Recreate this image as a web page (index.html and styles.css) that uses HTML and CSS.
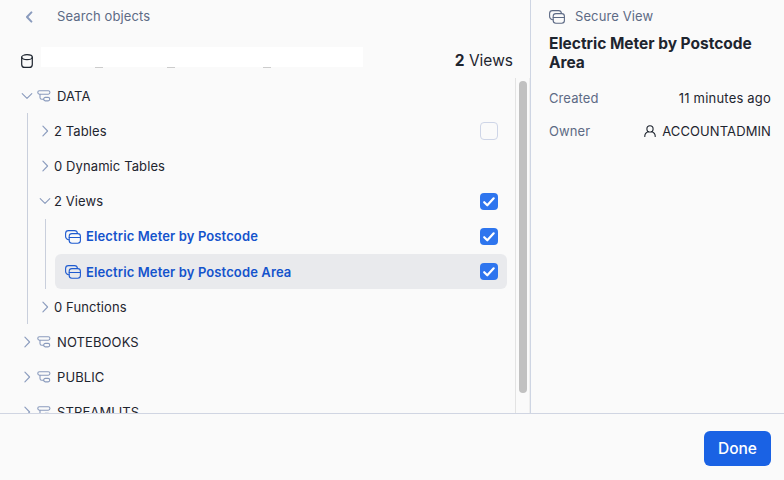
FILE: index.html
```
<!DOCTYPE html>
<html lang="en">
<head>
<meta charset="utf-8">
<title>Select objects</title>
<link rel="stylesheet" href="styles.css">
</head>
<body>
<svg class="defs" aria-hidden="true">
  <symbol id="right" viewBox="0 0 14 14"><path d="M4.9 2.2 9.6 7l-4.7 4.8"/></symbol>
  <symbol id="down" viewBox="0 0 14 14"><path d="M2.2 4.7 7 9.4l4.8-4.7"/></symbol>
  <symbol id="schema" viewBox="0 0 14 12"><rect x=".8" y=".7" width="12.1" height="3.5" rx="1.6"/><rect x="6.7" y="7.4" width="6" height="3.5" rx="1.6"/><path d="M3 4.2v3.2q0 1.8 1.8 1.8h1.9"/></symbol>
  <symbol id="view" viewBox="0 0 16 14"><path d="M4.1 9.7H3.5Q.6 8.9.6 6.5v-3Q.6.6 3.5.6h6q2.7 0 3 2.9"/><rect x="4.2" y="3.6" width="11.2" height="9.7" rx="2.7"/><path d="M4.2 7.5h11.2"/></symbol>
  <symbol id="check" viewBox="0 0 18 17"><path d="m4.2 9.2 3.1 3.1 6.4-7"/></symbol>
</svg>
<main class="main">
  <section class="browser">
    <div class="search">
      <svg class="back" viewBox="0 0 8 12"><path d="M6.4 1.4 2 6l4.4 4.6"/></svg>
      <span>Search objects</span>
    </div>
    <div class="database">
      <svg class="db" viewBox="0 0 12 14"><ellipse cx="6" cy="3.2" rx="5.3" ry="2.5"/><path d="M.7 3.2v7.2q0 3 3 3h4.6q3 0 3-3V3.2"/></svg>
      <div class="name"><i></i><i></i><i></i></div>
      <div class="count"><b>2</b> Views</div>
    </div>
    <div class="scroller">
      <div class="tree">
        <div class="row"><svg class="chev"><use href="#down"/></svg><svg class="schema"><use href="#schema"/></svg><span>DATA</span></div>
        <div class="group">
          <div class="row"><svg class="chev"><use href="#right"/></svg><span>2 Tables</span><span class="box"></span></div>
          <div class="row"><svg class="chev"><use href="#right"/></svg><span>0 Dynamic Tables</span></div>
          <div class="row"><svg class="chev"><use href="#down"/></svg><span>2 Views</span><svg class="box on"><use href="#check"/></svg></div>
          <div class="group">
            <div class="row leaf"><svg class="view"><use href="#view"/></svg><span>Electric Meter by Postcode</span><svg class="box on"><use href="#check"/></svg></div>
            <div class="row leaf selected"><svg class="view"><use href="#view"/></svg><span>Electric Meter by Postcode Area</span><svg class="box on"><use href="#check"/></svg></div>
          </div>
          <div class="row"><svg class="chev"><use href="#right"/></svg><span>0 Functions</span></div>
        </div>
        <div class="row"><svg class="chev"><use href="#right"/></svg><svg class="schema"><use href="#schema"/></svg><span>NOTEBOOKS</span></div>
        <div class="row"><svg class="chev"><use href="#right"/></svg><svg class="schema"><use href="#schema"/></svg><span>PUBLIC</span></div>
        <div class="row"><svg class="chev"><use href="#right"/></svg><svg class="schema"><use href="#schema"/></svg><span>STREAMLITS</span></div>
      </div>
      <div class="track"><div class="thumb"></div></div>
    </div>
  </section>
  <aside class="details">
    <div class="kind"><svg class="view"><use href="#view"/></svg><span>Secure View</span></div>
    <h1>Electric Meter by Postcode Area</h1>
    <div class="field"><span class="key">Created</span><span class="time">11 minutes ago</span></div>
    <div class="field"><span class="key">Owner</span><svg class="user" viewBox="0 0 12 12"><circle cx="6" cy="3.9" r="3.1"/><path d="M.8 11.6V11q0-2.8 3.6-4.4M11.2 11.6V11q0-2.8-3.6-4.4"/></svg><span>ACCOUNTADMIN</span></div>
  </aside>
</main>
<footer class="footer"><button class="done">Done</button></footer>
</body>
</html>
```

FILE: styles.css
```
* { box-sizing: border-box; }
body {
  margin: 0;
  width: 784px;
  height: 480px;
  overflow: hidden;
  display: flex;
  flex-direction: column;
  background: #fafafa;
  color: #1e252f;
  font: 13px/20px Inter, sans-serif;
  letter-spacing: .1px;
}
.defs { position: absolute; width: 0; height: 0; }
svg { display: block; flex: none; fill: none; stroke: currentColor; stroke-width: 1.1; stroke-linecap: round; stroke-linejoin: round; }
.main { display: flex; height: 413px; }
.browser { width: 530px; display: flex; flex-direction: column; }
.search { display: flex; align-items: center; height: 33px; padding: 0 0 1px 25px; gap: 24px; color: #5d6a85; }
.back { width: 8px; height: 12px; margin-top: 1px; color: #8a9bbd; stroke-width: 2; }
.database { display: flex; align-items: center; height: 45px; padding: 0 17px 0 21px; }
.db { width: 12px; height: 14px; margin-top: 10px; stroke-width: 1.2; }
.name { display: flex; align-items: flex-end; width: 322px; height: 21px; margin: 3px 0 0 8px; padding-left: 54px; gap: 64px; background: linear-gradient(#fff 20px, transparent 20px); }
.name i { width: 8px; height: 1px; background: #ccc; }
.name i:last-child { margin-left: 24px; }
.count { margin: 11px 0 0 auto; font-size: 15.5px; letter-spacing: 0; }
.count b { font-weight: 700; }
.scroller { display: flex; flex: 1; min-height: 0; overflow: hidden; }
.tree { width: 515px; flex: none; padding: .3px 0 0 20px; }
.row { display: flex; align-items: center; height: 35.15px; padding-right: 17px; }
.row > span:not(.box) { white-space: nowrap; }
.chev { width: 14px; height: 14px; color: #8a9bbd; }
.schema { width: 14px; height: 12px; margin: 0 6px 0 3px; color: #8a9bbd; }
.group { margin-left: 7px; padding-left: 10px; border-left: 1px solid #c9cfdc; }
.group .chev { margin: 0 2px 0 0; }
.group .group { padding-left: 9px; }
.view { width: 16px; height: 14px; }
.leaf { padding: 0 9px 0 10px; margin-right: 8px; gap: 5px; color: #1453cc; font-weight: 600; letter-spacing: .12px; }
.leaf .view { margin-top: 1px; color: #1f5bd0; }
.selected { background: #e9eaed; border-radius: 6px; }
.box { width: 18px; height: 18px; flex: none; margin-left: auto; border: 1px solid #ced5e7; border-radius: 4px; }
.box.on { height: 17px; border: 0; background: #2e75ee; color: #fff; stroke-width: 2.2; }
.track { width: 15px; padding: 3px 3px 0; border-left: 1px solid #e3e3e3; border-right: 1px solid #eee; }
.thumb { width: 8px; height: 312px; border-radius: 4px; background: #c1c1c1; }
.details { width: 254px; padding: 6px 13px 0 18px; border-left: 1px solid #ced5e3; }
.kind { display: flex; align-items: center; gap: 10px; color: #5d6a85; }
.kind .view { margin-top: 1px; }
h1 { margin: 8px 0 16px; font-size: 15.5px; line-height: 19px; font-weight: 700; letter-spacing: -.02px; }
.field { display: flex; align-items: center; justify-content: flex-end; height: 20px; margin-bottom: 13px; }
.key { margin-right: auto; color: #5d6a85; }
.time { letter-spacing: .2px; }
.user { width: 12px; height: 12px; margin-right: 6px; }
.footer { display: flex; justify-content: flex-end; height: 67px; padding: 17px 13px 0 0; border-top: 1px solid #d0d5e2; }
.done { width: 67px; height: 35px; padding: 0; border: 0; border-radius: 6px; background: #1a62e4; color: #fff; font: 500 15.5px/33px Inter, sans-serif; }
```
